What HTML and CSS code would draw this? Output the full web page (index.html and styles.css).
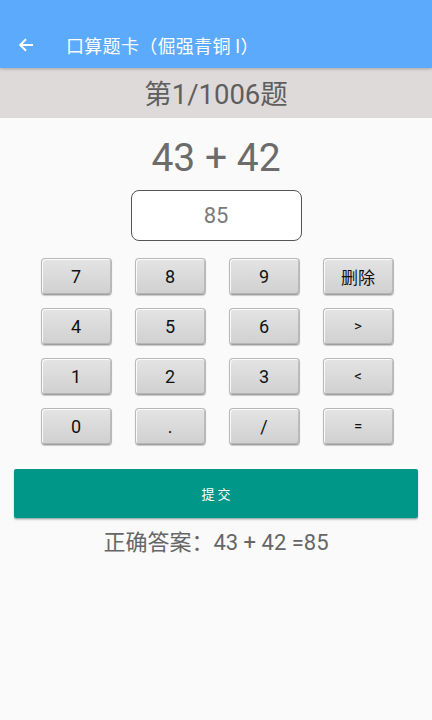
FILE: index.html
```html
<!DOCTYPE html>
<html lang="zh-CN">
<head>
<meta charset="utf-8">
<title>口算题卡</title>
<link rel="stylesheet" href="styles.css">
</head>
<body>
  <header class="appbar">
    <svg class="back" width="16" height="16" viewBox="0 0 16 16" aria-hidden="true">
      <path d="M15 8H2.5M8 2.2L2.2 8L8 13.8" fill="none" stroke="#fff" stroke-width="2"/>
    </svg>
    <h1 class="title">口算题卡（倔强青铜 I）</h1>
  </header>

  <div class="counter">第1/1006题</div>

  <main class="content">
    <div class="question">43 + 42</div>
    <div class="answer-box">85</div>

    <div class="keypad">
      <button class="key">7</button>
      <button class="key">8</button>
      <button class="key">9</button>
      <button class="key key-cn">删除</button>
      <button class="key">4</button>
      <button class="key">5</button>
      <button class="key">6</button>
      <button class="key key-sym">&gt;</button>
      <button class="key">1</button>
      <button class="key">2</button>
      <button class="key">3</button>
      <button class="key key-sym">&lt;</button>
      <button class="key">0</button>
      <button class="key">.</button>
      <button class="key">/</button>
      <button class="key key-sym">=</button>
    </div>

    <button class="submit">提 交</button>
    <div class="result">正确答案：43 + 42 =85</div>
  </main>
</body>
</html>
```

FILE: styles.css
```css
* { box-sizing: border-box; }

html, body {
  margin: 0;
  padding: 0;
}

body {
  width: 432px;
  height: 720px;
  background: #fafafa;
  font-family: "Roboto", "Noto Sans CJK SC", sans-serif;
  overflow: hidden;
}

.appbar {
  height: 68px;
  background: #5caafc;
  display: flex;
  align-items: center;
  padding: 24px 0 0 18px;
  position: relative;
  z-index: 1;
  box-shadow: 0 1px 3px rgba(0, 0, 0, 0.25);
}

.back {
  display: block;
  margin-top: -2px;
}

.title {
  margin: -3px 0 0 32px;
  font-size: 18px;
  font-weight: 400;
  color: #fff;
  font-family: "Noto Sans CJK SC", sans-serif;
  letter-spacing: 0.3px;
}

.counter {
  height: 50px;
  background: #dedad9;
  color: #5e5e5e;
  font-size: 27.5px;
  display: flex;
  align-items: center;
  justify-content: center;
  padding-bottom: 2px;
}

.content {
  display: flex;
  flex-direction: column;
  align-items: center;
}

.question {
  margin-top: 17px;
  height: 46px;
  line-height: 46px;
  font-size: 39px;
  color: #6c6c6c;
}

.answer-box {
  margin-top: 9px;
  width: 171px;
  height: 51px;
  border: 1.5px solid #555;
  border-radius: 8px;
  background: #fff;
  display: flex;
  align-items: center;
  justify-content: center;
  font-size: 22px;
  color: #7a7a7a;
}

.keypad {
  margin-top: 17px;
  display: grid;
  grid-template-columns: repeat(4, 71px);
  grid-auto-rows: 37px;
  column-gap: 23px;
  row-gap: 13px;
  margin-left: 2px;
}

.key {
  border: 1px solid #b8b8b8;
  border-bottom-color: #9e9e9e;
  border-radius: 4px;
  background: linear-gradient(to bottom, #e4e4e4 0%, #dadada 50%, #d0d0d0 100%);
  box-shadow: inset 1px 1px 0 rgba(255, 255, 255, 0.85),
              inset -1px -1px 0 rgba(150, 150, 150, 0.45),
              0 1px 1px rgba(0, 0, 0, 0.2);
  font-family: "Roboto", "Noto Sans CJK SC", sans-serif;
  font-size: 18px;
  color: #111;
  padding: 0 0 1px;
  display: flex;
  align-items: center;
  justify-content: center;
}

.key-cn { font-size: 17px; }
.key-sym { font-size: 15px; }

.submit {
  margin-top: 24px;
  width: 404px;
  height: 49px;
  border: none;
  border-radius: 2px;
  background: #009688;
  color: #fff;
  font-family: "Noto Sans CJK SC", sans-serif;
  font-size: 13px;
  box-shadow: 0 2px 2px rgba(0, 0, 0, 0.18), 0 1px 1px rgba(0, 150, 136, 0.3);
  padding: 0;
}

.result {
  margin-top: 6px;
  font-size: 22px;
  color: #666;
}
```
